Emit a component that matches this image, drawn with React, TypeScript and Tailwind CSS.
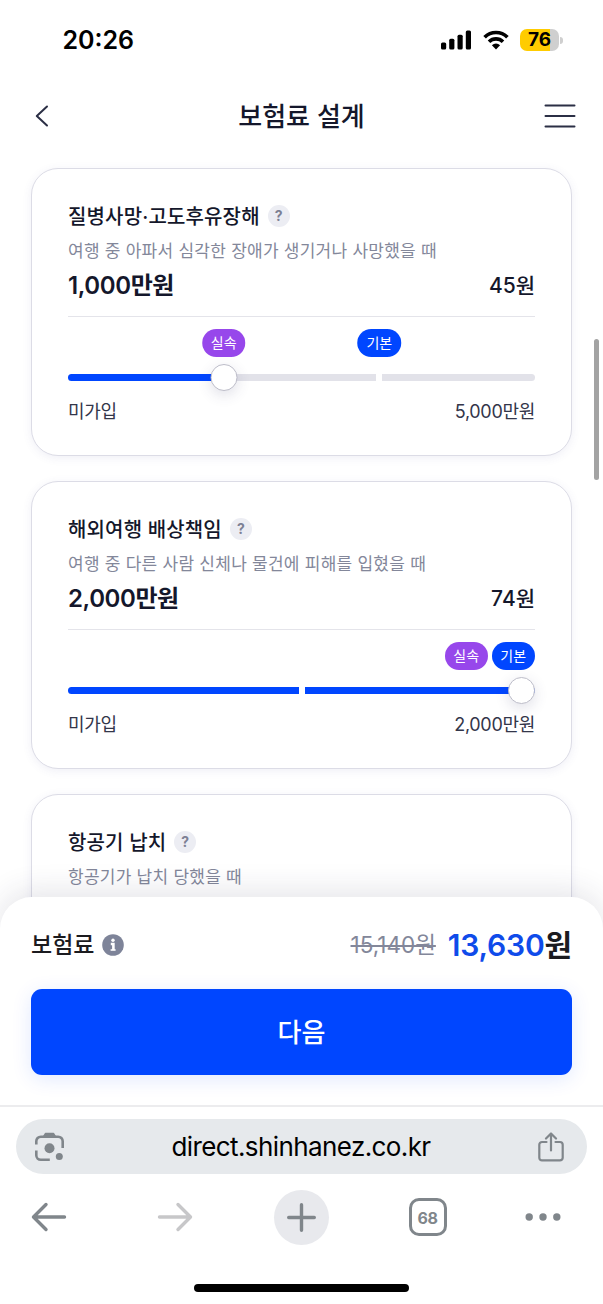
type Badge = { label: string; kind: 'saving' | 'basic' }

type Coverage = {
  title: string
  description: string
  amount?: string
  price?: string
  max?: string
  steps?: number
  value?: number
  badges?: (Badge & { step: number })[]
}

const coverages: Coverage[] = [
  {
    title: '질병사망·고도후유장해',
    description: '여행 중 아파서 심각한 장애가 생기거나 사망했을 때',
    amount: '1,000만원',
    price: '45원',
    max: '5,000만원',
    steps: 3,
    value: 1,
    badges: [
      { label: '실속', kind: 'saving', step: 1 },
      { label: '기본', kind: 'basic', step: 2 },
    ],
  },
  {
    title: '해외여행 배상책임',
    description: '여행 중 다른 사람 신체나 물건에 피해를 입혔을 때',
    amount: '2,000만원',
    price: '74원',
    max: '2,000만원',
    steps: 2,
    value: 2,
    badges: [
      { label: '실속', kind: 'saving', step: 2 },
      { label: '기본', kind: 'basic', step: 2 },
    ],
  },
  {
    title: '항공기 납치',
    description: '항공기가 납치 당했을 때',
  },
]

function StatusBar() {
  return (
    <div className="flex h-20 shrink-0 items-center justify-between pr-10 pl-[62.5px] text-black">
      <span className="text-[25px] leading-8 font-semibold">20:26</span>
      <div className="flex items-center">
        <svg width="30" height="20" viewBox="0 0 30 20" fill="currentColor">
          <rect x="0" y="12.4" width="5.2" height="7" rx="1.5" />
          <rect x="8.2" y="8.8" width="5.2" height="10.6" rx="1.5" />
          <rect x="16.5" y="4.8" width="5.2" height="14.6" rx="1.5" />
          <rect x="24.8" y="0.4" width="5.2" height="19" rx="1.5" />
        </svg>
        <svg className="ml-3" width="26" height="20" viewBox="0 0 26 20">
          <path d="M1.6 7.2a16.2 16.2 0 0 1 22.8 0" fill="none" stroke="currentColor" strokeWidth="3.7" />
          <path d="M6 11.7a10 10 0 0 1 14 0" fill="none" stroke="currentColor" strokeWidth="3.6" />
          <path d="M8.9 15.2a5.9 5.9 0 0 1 8.2 0L13 19.4z" fill="currentColor" />
        </svg>
        <div className="ml-[11px] flex h-[22px] w-[39px] items-center justify-center rounded-[7px] bg-linear-to-r from-[#ffcc00] from-[76%] to-[#cfcfcf] to-[76%]">
          <span className="text-[19px] leading-5 font-bold">76</span>
        </div>
        <span className="ml-px h-[7px] w-[3px] rounded-r-full bg-[#cfcfcf]" />
      </div>
    </div>
  )
}

function Header() {
  return (
    <header className="flex h-[72px] shrink-0 items-center justify-between px-[27px] text-[#2b2f45]">
      <svg width="32" height="22" viewBox="-8 0 32 22" fill="none" stroke="currentColor" strokeWidth="2" strokeLinecap="round" strokeLinejoin="round">
        <path d="M12 1.5 1.8 11 12 20.5" />
      </svg>
      <h1 className="pt-px text-[26px] leading-9 font-medium text-[#14172b]">보험료 설계</h1>
      <svg width="32" height="24" viewBox="0 0 32 24" stroke="currentColor" strokeWidth="2" strokeLinecap="round">
        <path d="M1.5 1.5h29M1.5 12h29M1.5 22.5h29" />
      </svg>
    </header>
  )
}

function PlanBadge({ label, kind }: Badge) {
  return (
    <span
      className={`flex h-7 w-[43.5px] items-center justify-center rounded-full pb-px text-[14px] leading-5 text-white ${kind === 'saving' ? 'bg-[#9747eb]' : 'bg-[#0046ff]'}`}
    >
      {label}
    </span>
  )
}

function StepSlider({ steps, value, badges }: { steps: number; value: number; badges: (Badge & { step: number })[] }) {
  const atEnd = value === steps
  const gaps = Array.from({ length: steps - 1 }, (_, i) => i + 1).filter((step) => step !== value)

  return (
    <div>
      {atEnd ? (
        <div className="mt-3 flex h-7 justify-end gap-[3.5px]">
          {badges.map((badge) => (
            <PlanBadge key={badge.label} label={badge.label} kind={badge.kind} />
          ))}
        </div>
      ) : (
        <div className="relative mt-3 h-7">
          {badges.map((badge) => (
            <div
              key={badge.label}
              className="absolute top-0 -translate-x-1/2"
              style={{ left: `${(badge.step / steps) * 100}%` }}
            >
              <PlanBadge label={badge.label} kind={badge.kind} />
            </div>
          ))}
        </div>
      )}
      <div className="relative mt-[17px] h-[6.5px] rounded-full bg-[#e2e2e9]">
        <div className="h-full rounded-full bg-[#0046ff]" style={{ width: `${(value / steps) * 100}%` }} />
        {gaps.map((step) => (
          <span
            key={step}
            className="absolute -top-px h-[9px] w-[6px] -translate-x-1/2 bg-white"
            style={{ left: `${(step / steps) * 100}%` }}
          />
        ))}
        <span
          className={`absolute -top-[10px] h-[27px] w-[27px] rounded-full border border-[#bdbdc9] bg-white shadow-[0_4px_14px_rgba(60,60,110,0.16)] ${atEnd ? '-translate-x-full' : '-translate-x-1/2'}`}
          style={{ left: `${(value / steps) * 100}%` }}
        />
      </div>
    </div>
  )
}

function CoverageCard({ item }: { item: Coverage }) {
  return (
    <section className="h-[288px] shrink-0 rounded-[27px] border border-[#dcdce6] bg-white px-9 pt-8 shadow-[0_2px_10px_rgba(80,80,160,0.09)]">
      <div className="flex h-8 items-center gap-2">
        <h2 className="text-[20px] leading-8 font-medium tracking-[0.15px] text-[#14172b]">{item.title}</h2>
        <span className="-mt-0.5 flex h-[22px] w-[22px] items-center justify-center rounded-full bg-[#ecedf3] text-[14px] leading-none font-bold text-[#7c8094]">
          ?
        </span>
      </div>
      <p className="mt-0.5 h-8 text-[17px] leading-8 tracking-[0.25px] whitespace-nowrap text-[#83879a]">
        {item.description}
      </p>
      {item.steps && item.value && item.badges && (
        <>
          <div className="mt-px flex h-9 items-center justify-between text-[#14172b]">
            <strong className="text-[24px] leading-9 font-semibold tracking-[-0.4px]">{item.amount}</strong>
            <span className="text-[21px] leading-9 font-medium">{item.price}</span>
          </div>
          <div className="mt-3 h-px bg-[#e4e4ea]" />
          <StepSlider steps={item.steps} value={item.value} badges={item.badges} />
          <div className="mt-[15.5px] flex h-8 items-center justify-between text-[18px] leading-8 tracking-[-0.3px] text-[#33364a]">
            <span>미가입</span>
            <span>{item.max}</span>
          </div>
        </>
      )}
    </section>
  )
}

function PremiumSheet() {
  return (
    <div className="z-10 h-52 shrink-0 rounded-t-[32px] bg-white px-[31px] pt-7 shadow-[0_-6px_30px_rgba(40,40,70,0.12)]">
      <div className="flex h-10 items-center justify-between">
        <div className="flex items-center gap-2">
          <span className="text-[23px] leading-10 font-medium text-[#1b1b1f]">보험료</span>
          <svg width="22" height="22" viewBox="0 0 22 22">
            <circle cx="11" cy="11" r="10.8" fill="#7e8499" />
            <circle cx="11" cy="6.2" r="1.7" fill="#fff" />
            <path d="M8.8 10h2.6v6" fill="none" stroke="#fff" strokeWidth="2.6" />
            <path d="M8.6 16h5" stroke="#fff" strokeWidth="1.6" />
          </svg>
        </div>
        <div className="flex items-center gap-3 text-[#1b1b1f]">
          <del className="text-[22.5px] leading-10 text-[#83879a]">15,140원</del>
          <span className="text-[30px] leading-10 font-semibold tracking-[-0.2px]">
            <span className="text-[#0f4bea]">13,630</span>원
          </span>
        </div>
      </div>
      <button className="mt-6 flex h-[86px] w-full items-center justify-center rounded-[11px] bg-[#0046ff] pt-0.5 text-[26px] leading-9 font-medium text-white shadow-[0_4px_20px_rgba(0,70,255,0.12)]">
        다음
      </button>
    </div>
  )
}

function BrowserBar() {
  return (
    <footer className="z-10 flex h-[199px] shrink-0 flex-col border-t-2 border-[#ececee] bg-white pt-3 text-[#80868b]">
      <div className="mx-4 flex h-[55px] shrink-0 items-center justify-between rounded-full bg-[#e6e9ec] pr-[23px] pl-[19px]">
        <svg width="29" height="30" viewBox="0 0 29 30" fill="none" stroke="currentColor" strokeWidth="2.6">
          <path d="M1.3 12.5V9.2A4.5 4.500 0 0 1 5.800 4.700h17.400a4.500 4.500 0 0 1 4.500 4.500V16" />
          <path d="M1.3 18.500v4.800a4.500 4.500 0 0 0 4.500 4.500h9" />
          <path d="M8.500 4.600 10.600 1.500h7.800l2.100 3.100z" fill="currentColor" strokeWidth="1.500" strokeLinejoin="round" />
          <circle cx="14.500" cy="16.200" r="5" fill="currentColor" stroke="none" />
          <circle cx="24.300" cy="24.500" r="3.500" fill="currentColor" stroke="none" />
        </svg>
        <span className="text-[26px] leading-8 tracking-[-0.6px] text-black">direct.shinhanez.co.kr</span>
        <svg width="26" height="30" viewBox="0 0 26 30" fill="none" stroke="currentColor" strokeWidth="2.2" strokeLinecap="round" strokeLinejoin="round">
          <path d="M8.5 10H4a2.7 2.7 0 0 0-2.7 2.7v13A2.7 2.7 0 0 0 4 28.4h18a2.7 2.7 0 0 0 2.7-2.7v-13A2.7 2.7 0 0 0 22 10h-4.5" />
          <path d="M13 18.5V1.600M8 6.500l5-5 5 5" />
        </svg>
      </div>
      <nav className="mt-[15px] flex h-14 shrink-0 items-center pl-[31px]">
        <svg width="36" height="30" viewBox="0 0 36 30" fill="none" stroke="currentColor" strokeWidth="3.4" strokeLinecap="round" strokeLinejoin="round">
          <path d="M15 2.5 2.5 15 15 27.5M3 15h30.5" />
        </svg>
        <svg className="ml-[90px] text-[#c7c7c9]" width="36" height="30" viewBox="0 0 36 30" fill="none" stroke="currentColor" strokeWidth="3.4" strokeLinecap="round" strokeLinejoin="round">
          <path d="M21 2.5 33.5 15 21 27.5M33 15H2.5" />
        </svg>
        <div className="ml-[81px] flex h-[55px] w-[55px] items-center justify-center rounded-full bg-[#e8e9ed]">
          <svg width="29" height="29" viewBox="0 0 29 29" stroke="currentColor" strokeWidth="3.4" strokeLinecap="round">
            <path d="M14.5 1.7v25.6M1.7 14.5h25.6" />
          </svg>
        </div>
        <span className="ml-[79.5px] flex h-[38px] w-[38px] items-center justify-center rounded-[10px] border-[3px] border-[#80868b] pt-px text-[16px] leading-5 font-bold tracking-[-0.3px]">
          68
        </span>
        <svg className="ml-[78px]" width="36" height="8" viewBox="0 0 36 8" fill="currentColor">
          <circle cx="4.2" cy="4" r="3.7" />
          <circle cx="18" cy="4" r="3.7" />
          <circle cx="31.8" cy="4" r="3.7" />
        </svg>
      </nav>
      <div className="mx-auto mt-[38.5px] h-2 w-[215px] shrink-0 rounded-full bg-black" />
    </footer>
  )
}

export default function App() {
  return (
    <div className="relative flex h-[1304px] w-[603px] flex-col overflow-hidden bg-white font-['Inter','Noto_Sans_CJK_KR',sans-serif]">
      <StatusBar />
      <Header />
      <main className="flex h-[745px] shrink-0 flex-col gap-[25px] overflow-hidden px-[31px] pt-4">
        {coverages.map((item) => (
          <CoverageCard key={item.title} item={item} />
        ))}
      </main>
      <PremiumSheet />
      <BrowserBar />
      <div className="absolute top-[339px] right-[4px] h-[141px] w-[5px] rounded-full bg-[#a3a3a3]" />
    </div>
  )
}
